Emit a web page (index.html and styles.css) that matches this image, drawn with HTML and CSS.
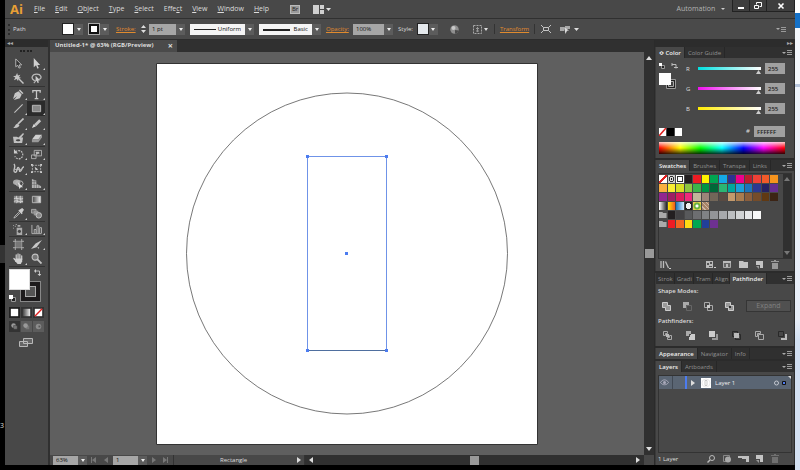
FILE: index.html
```html
<!DOCTYPE html>
<html lang="en">
<head>
    <meta charset="UTF-8">
    <meta name="viewport" content="width=device-width, initial-scale=1.0">
    <title>Untitled-1</title>
    <link rel="stylesheet" href="styles.css">
</head>
<body>
    <div class="behind-left"><span>3</span></div>

    <div class="app">
        <header class="menubar">
            <div class="logo">Ai</div>
            <nav class="menus">
                <button><u>F</u>ile</button>
                <button><u>E</u>dit</button>
                <button><u>O</u>bject</button>
                <button><u>T</u>ype</button>
                <button><u>S</u>elect</button>
                <button>Effe<u>c</u>t</button>
                <button><u>V</u>iew</button>
                <button><u>W</u>indow</button>
                <button><u>H</u>elp</button>
            </nav>
            <button class="bridge" aria-label="Go to Bridge">Br</button>
            <button class="arrange" aria-label="Arrange documents">
                <svg width="18" height="9" viewBox="0 0 18 9"><path fill="#d0d0d0" d="M0 0h6v9H0zM7 0h4v4H7zM7 5h4v4H7z"/><path fill="#e0e0e0" d="M13 3h5l-2.500 3z"/></svg>
            </button>
            <button class="workspace">Automation <i class="caret"></i></button>
            <div class="window-buttons">
                <button aria-label="Minimize"><svg width="8" height="8" viewBox="0 0 8 8"><path fill="#fff" d="M1 5h6v2H1z"/></svg></button>
                <button aria-label="Restore"><svg width="8" height="8" viewBox="0 0 8 8"><path fill="none" stroke="#fff" d="M2.500 2.500v-2h5v4h-2M.5 3.500h4v3h-4z"/></svg></button>
                <button class="close" aria-label="Close"><svg width="8" height="8" viewBox="0 0 8 8"><path stroke="#fff" stroke-width="1.600" d="M1.500 1.500l5 5M6.500 1.500l-5 5"/></svg></button>
            </div>
        </header>

        <div class="options">
            <div class="grip"></div>
            <span class="selection">Path</span>
            <button class="drop" aria-label="Fill"><span class="chip fill-chip"></span><i class="arrow"></i></button>
            <button class="drop stroke-drop" aria-label="Stroke color"><span class="chip stroke-chip"></span><i class="arrow"></i></button>
            <div class="field weight">
                <a href="#stroke">Stroke:</a>
                <svg class="spinner" width="7" height="10" viewBox="0 0 7 10"><path fill="#ddd" d="M3.500 1L6 4H1zM3.500 9L1 6h5z"/></svg>
                <input type="text" value="1 pt" aria-label="Stroke weight"><button class="arrow" aria-label="Weights"></button>
            </div>
            <div class="field profile"><select aria-label="Width profile"><option>Uniform</option></select><i class="arrow"></i></div>
            <div class="field profile brush"><select aria-label="Brush"><option>Basic</option></select><i class="arrow"></i></div>
            <div class="field opacity">
                <a href="#opacity">Opacity:</a>
                <input type="text" value="100%" aria-label="Opacity"><button class="arrow" aria-label="Opacities"></button>
            </div>
            <div class="field style">
                <span>Style:</span>
                <button class="drop" aria-label="Graphic style"><span class="chip style-chip"></span><i class="arrow"></i></button>
            </div>
            <button class="recolor" aria-label="Recolor artwork">
                <svg width="9" height="9" viewBox="0 0 9 9"><circle cx="4.500" cy="4.500" r="4.200" fill="#8f8f8f"/><circle cx="3.500" cy="3" r="2" fill="#c8c8c8"/><path fill="#4a4a4a" d="M5 5l3.500.5A4.200 4.200 0 0 1 5 8.700z"/></svg>
            </button>
            <button class="align" aria-label="Align">
                <svg width="15" height="9" viewBox="0 0 15 9"><path fill="none" stroke="#a8a8a8" stroke-dasharray="2 1" d="M.5.5h8v8h-8z"/><path fill="none" stroke="#999" d="M3 3.500h3M4.500 2v5M3 6h3"/><path fill="#ddd" d="M11 3h4l-2 3z"/></svg>
            </button>
            <div class="transform"><a href="#transform">Transform</a></div>
            <button class="isolate" aria-label="Isolate">
                <svg width="10" height="8" viewBox="0 0 10 8"><path fill="none" stroke="#c4c4c4" d="M2.500 2.500h5v3h-5zM0 0l2.500 2.500M10 0L7.500 2.500M0 8l2.500-2.500M10 8L7.500 5.500"/></svg>
            </button>
            <button aria-label="Select similar">
                <svg width="19" height="9" viewBox="0 0 19 9"><path fill="#a8a8a8" d="M0 2h4v4H0zM5 1h5v3H5z"/><path fill="#ddd" d="M4 2l5 3.500-2 .3L5.500 9zM14 3h5l-2.500 3z"/></svg>
            </button>
            <button class="flyout" aria-label="Control menu"></button>
        </div>

        <main class="workarea">
            <aside class="toolbox">
                <div class="dock-head">◂◂</div>
                <div class="tool-grip"></div>
                <div class="tools">
                    <button aria-label="Selection"><svg viewBox="0 0 12 12"><path fill="#333" stroke="#bbb" d="M3 1l6.500 6.500H6.800L8 10.500l-1.500.5-1.200-3L3 9.500z"/></svg></button>
                    <button class="more" aria-label="Direct selection"><svg viewBox="0 0 12 12"><path fill="#d0d0d0" d="M3 0l7 7.500H7L8.500 11l-1.500.6L5.500 8 3 10z"/></svg></button>
                    <button aria-label="Magic wand"><svg viewBox="0 0 12 12"><path stroke="#c4c4c4" stroke-width="1.600" d="M5.500 5.500l6 6"/><path fill="#c4c4c4" d="M4.500 0l.9 2.800L8 1.800 6.500 4.300 9 5.500l-3 .4L5.500 9 4 6.500 1 8l1.500-3L0 3.500l3-.4z"/></svg></button>
                    <button aria-label="Lasso"><svg viewBox="0 0 12 12"><path fill="none" stroke="#b8b8b8" stroke-width="1.400" d="M3.500 8C-.5 6 1 1.500 6 1.300s6.500 4 3 5.700M3.500 8c2 0 1 2-.5 3"/><path fill="#ccc" d="M5 3l5 5-2 .2.500 2.500-1.300.3L6.200 8.500 5 9.500z"/></svg></button>
                    <button class="more rule" aria-label="Pen"><svg viewBox="0 0 12 12"><path fill="#c6c6c6" d="M7.500.5l4 4-1.500 1L6.500 2zM6 2.500L9.500 6 7.500 10 1 12l3.500-4.500L0 11l2-6.500z"/></svg></button>
                    <button class="more rule" aria-label="Type"><svg viewBox="0 0 12 12"><path fill="none" stroke="#c8c8c8" stroke-width="1.400" d="M2 4V1.700h8V4M6 1.700v8.600M4 10.500h4"/></svg></button>
                    <button class="more" aria-label="Line segment"><svg viewBox="0 0 12 12"><path stroke="#c0c0c0" stroke-width="1.200" d="M1.500 10.500l9-9"/></svg></button>
                    <button class="more active" aria-label="Rectangle"><svg viewBox="0 0 12 12"><path fill="#888" stroke="#bdbdbd" d="M1.500 2.500h9v7h-9z"/></svg></button>
                    <button class="more" aria-label="Paintbrush"><svg viewBox="0 0 12 12"><path stroke="#c4c4c4" stroke-width="1.800" d="M11.500.5l-6 6"/><path fill="#c4c4c4" d="M5 6l2 2c-1 3-4 3-7 3 2-.5 2-4 5-5z"/></svg></button>
                    <button class="more" aria-label="Pencil"><svg viewBox="0 0 12 12"><path stroke="#c4c4c4" stroke-width="3" d="M10 2.500L4.500 8"/><path fill="#ddd" d="M3 6.500L5.500 9 1 11z"/></svg></button>
                    <button class="more" aria-label="Blob brush"><svg viewBox="0 0 12 12"><path fill="#c0c0c0" d="M0 4h4l2 1 5-5 1 1-3 4h2l-1 6H1z"/><path fill="#444" d="M3 7.500c2-1.500 5-.5 5 .5s-4 2-5-.5z"/></svg></button>
                    <button class="more" aria-label="Eraser"><svg viewBox="0 0 12 12"><path fill="#cfcfcf" d="M5 2h7L8 7H1z"/><path fill="#999" d="M1 7h7v3H1zM8 7l4-5v3l-4 5z"/></svg></button>
                    <button class="more rule" aria-label="Rotate"><svg viewBox="0 0 12 12"><path fill="none" stroke="#c0c0c0" stroke-width="1.300" stroke-dasharray="2 1" d="M3 3a4.500 4.500 0 1 1-1 5"/><path fill="#ccc" d="M1 0v5h4.500z"/></svg></button>
                    <button class="more rule" aria-label="Scale"><svg viewBox="0 0 12 12"><path fill="none" stroke="#b0b0b0" d="M3.500 1.500h8v6h-8zM.5 6.500h5v4h-5z"/><path fill="#bbb" d="M5 3h4v3L7.700 5 6 7z"/></svg></button>
                    <button class="more" aria-label="Width"><svg viewBox="0 0 12 12"><path fill="none" stroke="#c4c4c4" stroke-width="1.500" d="M1 1c3 3-2 8 1 9s2-6 4-5 0 5 2 4 1-4 4-5"/><path stroke="#bbb" d="M2 7h8"/></svg></button>
                    <button aria-label="Free transform"><svg viewBox="0 0 12 12"><path fill="none" stroke="#b4b4b4" stroke-dasharray="2 1" d="M1.500 2.500h9v7h-9z"/><path fill="#d0d0d0" d="M0 1h2v2H0zM0 9h2v2H0zM10 1h2v2h-2zM10 9h2v2h-2zM4 4l4 3-3 1z"/></svg></button>
                    <button class="more" aria-label="Shape builder"><svg viewBox="0 0 12 12"><ellipse cx="4" cy="4.500" rx="4" ry="3" fill="#aaa"/><ellipse cx="7" cy="6" rx="4" ry="3" fill="none" stroke="#bbb"/><path fill="#ddd" d="M5 4l6 6-2.500.1L7 12z"/></svg></button>
                    <button class="more" aria-label="Perspective grid"><svg viewBox="0 0 12 12"><path fill="#b4b4b4" d="M1 1l5 2v3l5 3v2H1z"/><path stroke="#555" stroke-width=".5" d="M3.500 1v10M6 3v8M8.500 7v4M1 4h6M1 7h8"/></svg></button>
                    <button class="rule" aria-label="Mesh"><svg viewBox="0 0 12 12"><path fill="#888" d="M1 2h10v8H1z"/><path fill="none" stroke="#e4e4e4" stroke-width=".8" d="M1 5c3-2 6 2 10 0M1 8c3-2 6 2 10 0M4 2c-1 3 2 5 0 8M8 2c-1 3 2 5 0 8"/></svg></button>
                    <button class="rule" aria-label="Gradient"><svg viewBox="0 0 12 12"><path fill="url(#grey)" stroke="#bbb" d="M1.500 2.500h9v7h-9z"/></svg></button>
                    <button class="more" aria-label="Eyedropper"><svg viewBox="0 0 12 12"><path fill="#ccc" d="M7 2l3-2 2 2-2 3 .5.8-1 1L5.800 3l1-1z"/><path fill="none" stroke="#bbb" d="M6.500 4.500L2 9l-1 2 2-1 4.500-4.500"/></svg></button>
                    <button aria-label="Blend"><svg viewBox="0 0 12 12"><path fill="#777" stroke="#aaa" d="M.5 1.500h5v4h-5z"/><path fill="#999" d="M3 3h5v5H3z"/><circle cx="8.500" cy="8" r="3" fill="#888" stroke="#ccc"/></svg></button>
                    <button class="more rule" aria-label="Symbol sprayer"><svg viewBox="0 0 12 12"><path fill="#aaa" d="M4 4h6v8H4zM5 1h3v2H5z"/><circle cx="7" cy="8" r="1.700" fill="#444"/><path fill="#bbb" d="M0 1h1v1H0zM2 2h1v1H2zM0 4h1v1H0zM3 0h1v1H3z"/></svg></button>
                    <button class="more rule" aria-label="Column graph"><svg viewBox="0 0 12 12"><path fill="none" stroke="#b8b8b8" d="M1 1v9.500h10.500M3.500 10V6h2v4M6.500 10V2h2v8M9.500 10V4h2v6"/></svg></button>
                    <button class="rule" aria-label="Artboard"><svg viewBox="0 0 12 12"><path fill="none" stroke="#b4b4b4" d="M2.500 0v12M9.500 0v12M0 2.500h12M0 9.500h12"/><path fill="#777" d="M3 3h6v6H3z"/></svg></button>
                    <button class="more rule" aria-label="Slice"><svg viewBox="0 0 12 12"><path fill="#c6c6c6" d="M12 1L5 5 0 11l6-2zM7 9l2 0-1 2z"/></svg></button>
                    <button class="more" aria-label="Hand"><svg viewBox="0 0 12 12"><path fill="none" stroke="#cfcfcf" stroke-width="1.300" stroke-linecap="round" d="M3.500 7V2M5.500 6V1M7.500 6V1.500M9.500 7V3M1 6l2.500 3"/><path fill="#cfcfcf" d="M3 6h7v3l-1.500 3H5L2.500 9z"/></svg></button>
                    <button aria-label="Zoom"><svg viewBox="0 0 12 12"><circle cx="4.500" cy="4.500" r="3.300" fill="#777" stroke="#c4c4c4" stroke-width="1.200"/><path stroke="#c4c4c4" stroke-width="2" d="M7 7l4.500 4.500"/></svg></button>
                </div>
                <div class="paint">
                    <button class="stroke-box" aria-label="Stroke"></button>
                    <button class="fill-box" aria-label="Fill"></button>
                    <svg class="swap" width="7" height="7" viewBox="0 0 7 7"><path fill="none" stroke="#bbb" d="M1 2h4.500v4"/><path fill="#ccc" d="M0 2l2-2v4zM3.500 5h4l-2 2z"/></svg>
                    <svg class="default" width="7" height="7" viewBox="0 0 7 7"><path fill="#222" stroke="#999" d="M2.500 2.500h4v4h-4z"/><path fill="#fff" d="M0 0h4v4H0z"/></svg>
                </div>
                <div class="modes">
                    <button class="on" aria-label="Color"><svg viewBox="0 0 12 10"><path fill="#fff" d="M2 1h8v8H2z"/></svg></button>
                    <button aria-label="Gradient"><svg viewBox="0 0 12 10"><path fill="url(#grey)" d="M2 1h8v8H2z"/></svg></button>
                    <button aria-label="None"><svg viewBox="0 0 12 10"><path fill="#fff" d="M2 1h8v8H2z"/><path stroke="#e02020" stroke-width="1.500" d="M2 9l8-8"/></svg></button>
                </div>
                <div class="modes draw">
                    <button class="on" aria-label="Draw normal"><svg viewBox="0 0 12 10"><circle cx="5" cy="4" r="2.500" fill="#999"/><path fill="#777" stroke="#333" stroke-width=".5" d="M5 4h4v4H5z"/></svg></button>
                    <button aria-label="Draw behind"><svg viewBox="0 0 12 10"><path fill="#777" d="M5 4h4v4H5z"/><circle cx="5" cy="4" r="2.500" fill="#999"/></svg></button>
                    <button aria-label="Draw inside"><svg viewBox="0 0 12 10"><circle cx="6" cy="5" r="3" fill="#8c8c8c"/><path fill="#555" d="M6 4h2v2H6z"/></svg></button>
                </div>
                <button class="screen" aria-label="Screen mode"><svg width="14" height="11" viewBox="0 0 14 11"><path fill="#666" stroke="#b8b8b8" d="M4.500 1.500h9v5h-9zM.5 4.500h8v5h-8z"/></svg></button>
            </aside>

            <section class="document">
                <div class="tabs"><div class="doc-tab">Untitled-1* @ 63% (RGB/Preview) <button aria-label="Close tab">×</button></div></div>
                <div class="viewport">
                    <div class="canvas">
                        <svg class="artboard" width="382" height="382" viewBox="0 0 382 382">
                            <path fill="#fff" stroke="#333" d="M.5.5h381v381H.5z"/>
                            <circle cx="191" cy="190.500" r="160.500" fill="none" stroke="#555" stroke-width=".8"/>
                            <path fill="none" stroke="#6f93e8" d="M151.500 93.500h79v194h-79z"/>
                            <path stroke="#4f6f9f" d="M152 287.500h78"/>
                            <path fill="#4c7cf0" d="M150 92h3v3h-3zM229 92h3v3h-3zM150 286h3v3h-3zM229 286h3v3h-3zM189 189h3v3h-3z"/>
                        </svg>
                    </div>
                    <div class="vscroll"><i class="up"></i><i class="thumb"></i><i class="down"></i></div>
                </div>
                <footer class="status">
                    <div class="field"><input type="text" value="63%" aria-label="Zoom level"><button class="arrow" aria-label="Zoom levels"></button></div>
                    <svg class="nav" width="18" height="6" viewBox="0 0 18 6"><path fill="#777" d="M0 0h1v6H0zM5 0v6L1 3zM17 0v6l-4-3z"/></svg>
                    <div class="field"><input type="text" value="1" aria-label="Artboard number"><button class="arrow" aria-label="Artboards"></button></div>
                    <svg class="nav" width="18" height="6" viewBox="0 0 18 6"><path fill="#777" d="M1 0v6l4-3zM12 0v6l4-3zM16 0h1v6h-1z"/></svg>
                    <div class="current">Rectangle<i class="right"></i></div>
                    <div class="hscroll"><i class="left"></i><i class="thumb"></i><i class="right"></i></div>
                    <div class="corner"></div>
                </footer>
            </section>

            <aside class="panels">
                <div class="dock-head">▸▸</div>
                <section class="panel color-panel">
                    <div class="panel-tabs"><button class="on">≎ Color</button><button>Color Guide</button><button class="flyout" aria-label="Color menu"></button></div>
                    <div class="color-body">
                        <div class="color-chips">
                            <svg width="20" height="30" viewBox="0 0 20 30"><path fill="#222" stroke="#999" d="M2.500 2.500h3v3h-3z"/><path fill="#fff" d="M0 0h3v3H0z"/><path fill="none" stroke="#bbb" d="M13 1.500h4v4M13 0v3M15 4.500h4"/><path fill="#222" stroke="#999" d="M7.500 16.500h9v9h-9z"/><path fill="#444" stroke="#aaa" d="M9.500 18.500h5v5h-5z"/><path fill="#fff" d="M0 10h12v12H0z"/></svg>
                        </div>
                        <div class="channels">
                            <label class="channel red"><span>R</span><input type="range" min="0" max="255" value="255" aria-label="Red"><input type="text" value="255"></label>
                            <label class="channel green"><span>G</span><input type="range" min="0" max="255" value="255" aria-label="Green"><input type="text" value="255"></label>
                            <label class="channel blue"><span>B</span><input type="range" min="0" max="255" value="255" aria-label="Blue"><input type="text" value="255"></label>
                        </div>
                    </div>
                    <div class="hex-row">
                        <svg width="23" height="8" viewBox="0 0 23 8"><path fill="#fff" d="M0 0h7v8H0zM16 0h7v8h-7z"/><path stroke="#e02020" stroke-width="1.500" d="M0 8l7-8"/><path d="M8 0h7v8H8z"/></svg>
                        <label># <input type="text" value="FFFFFF"></label>
                    </div>
                    <div class="spectrum"></div>
                </section>

                <section class="panel swatch-panel">
                    <div class="panel-tabs"><button class="on">Swatches</button><button>Brushes</button><button>Transpa</button><button>Links</button><button class="flyout" aria-label="Swatches menu"></button></div>
                    <div class="swatch-well">
                        <div class="swatches" id="swatches"></div>
                        <div class="well-scroll"><i class="up"></i><i class="down"></i></div>
                    </div>
                    <div class="panel-foot">
                        <button class="first" aria-label="Libraries"><svg viewBox="0 0 12 10"><path fill="none" stroke="#bbb" stroke-width="1.300" d="M1 1v7M3.500 1v7M5.500 1.500l3 6.500"/><path fill="#ccc" d="M9 8h2v1H9z"/></svg></button>
                        <button aria-label="Kinds"><svg viewBox="0 0 12 10"><path fill="#bbb" d="M1 1h7v7H1z"/><path fill="#555" d="M2 3h2v2H2zM5 2h2v2H5zM4 6h3v1H4z"/><path fill="#ccc" d="M9 7h2v1H9z"/></svg></button>
                        <button aria-label="Options"><svg viewBox="0 0 12 10"><path fill="#666" stroke="#aaa" d="M2.500 1.500h7v6h-7z"/><path fill="#bbb" d="M2 1h8v2H2zM5 4h2v3H5z"/></svg></button>
                        <button aria-label="New group"><svg viewBox="0 0 12 10"><path fill="#c4c4c4" d="M2 1h4l1 1h4v6H2z"/></svg></button>
                        <button aria-label="New swatch"><svg viewBox="0 0 12 10"><path fill="#c4c4c4" d="M3 1h7v7H7V5H3z"/><path fill="#999" d="M3 6h3v3z"/></svg></button>
                        <button aria-label="Delete"><svg viewBox="0 0 12 10"><path fill="#999" d="M3 3h6v6H3zM2 1h8v1H2zM5 0h2v1H5z"/></svg></button>
                    </div>
                </section>

                <section class="panel path-panel">
                    <div class="panel-tabs"><button>Strok</button><button>Gradi</button><button>Tram</button><button>Align</button><button class="on">Pathfinder</button><button class="flyout" aria-label="Pathfinder menu"></button></div>
                    <div class="path-body">
                        <div class="path-title">Shape Modes:</div>
                        <div class="shape-modes">
                            <button aria-label="Unite"><svg viewBox="0 0 9 9"><path fill="#999" stroke="#ccc" d="M.5.5h5v3h3v5h-5v-3h-3z"/></svg></button>
                            <button aria-label="Minus front"><svg viewBox="0 0 9 9"><path fill="#aaa" d="M0 0h6v3H3v3H0z"/><path fill="none" stroke="#666" d="M3.500 3.500h5v5h-5z"/></svg></button>
                            <button aria-label="Intersect"><svg viewBox="0 0 9 9"><path fill="none" stroke="#aaa" d="M.5.5h5v5h-5zM3.500 3.500h5v5h-5z"/><path fill="#ccc" d="M3 3h3v3H3z"/></svg></button>
                            <button aria-label="Exclude"><svg viewBox="0 0 9 9"><path fill="#999" stroke="#ccc" d="M.5.5h5v3h3v5h-5v-3h-3z"/><path fill="#333" d="M4 4h2v2H4z"/></svg></button>
                            <button class="expand" disabled>Expand</button>
                        </div>
                        <div class="path-title">Pathfinders:</div>
                        <div class="pathfinders">
                            <button aria-label="Divide"><svg viewBox="0 0 9 9"><path fill="none" stroke="#aaa" d="M.5.5h4v2h-2v2h-2zM6.500 4.500h2v4h-4v-2h2z"/><path fill="#bbb" d="M3 3h3v3H3z"/></svg></button>
                            <button aria-label="Trim"><svg viewBox="0 0 9 9"><path fill="#aaa" d="M0 0h5v3H3v2H0z"/><path fill="#ccc" d="M4 4h1V3h4v6H3V6h1z"/></svg></button>
                            <button aria-label="Merge"><svg viewBox="0 0 9 9"><path fill="#ccc" d="M0 0h6v6H0z"/><path fill="#999" d="M7 3h2v6H3V7h4z"/></svg></button>
                            <button aria-label="Crop"><svg viewBox="0 0 9 9"><path fill="none" stroke="#292929" d="M.5.5h5v5h-5zM3.500 3.500h5v5h-5z"/><path fill="#bbb" d="M2 2h5v5H2z"/></svg></button>
                            <button aria-label="Outline"><svg viewBox="0 0 9 9"><path fill="none" stroke="#aaa" d="M.5.5h5v2h-3v3h-2zM3.500 3.500h5v5h-5z"/></svg></button>
                            <button aria-label="Minus back"><svg viewBox="0 0 9 9"><path fill="none" stroke="#292929" d="M.5.5h5v5h-5z"/><path fill="#bbb" d="M7 3h2v6H3V7h4z"/></svg></button>
                        </div>
                    </div>
                </section>

                <section class="panel">
                    <div class="panel-tabs"><button class="on">Appearance</button><button>Navigator</button><button>Info</button><button class="flyout" aria-label="Appearance menu"></button></div>
                </section>

                <section class="panel layers-panel">
                    <div class="panel-tabs"><button class="on">Layers</button><button>Artboards</button><button class="flyout" aria-label="Layers menu"></button></div>
                    <div class="layers">
                        <div class="layer">
                            <svg class="eye" width="9" height="7" viewBox="0 0 9 7"><path fill="none" stroke="#aab" d="M.5 3.500c2-3.500 6-3.500 8 0-2 3-6 3-8 0z"/><circle cx="4.500" cy="3.500" r="1.500" fill="#aab"/></svg>
                            <span class="lock"></span>
                            <span class="layer-color"></span>
                            <i class="right"></i>
                            <svg class="thumbnail" width="10" height="10" viewBox="0 0 10 10"><path fill="#fff" d="M0 0h10v10H0z"/><circle cx="5" cy="5" r="4" fill="none" stroke="#ddd" stroke-width=".6"/><path fill="none" stroke="#aaa" stroke-width=".6" d="M4 2.500h2v5H4z"/></svg>
                            <span class="layer-name">Layer 1</span>
                            <svg class="target" width="17" height="13" viewBox="0 0 17 13"><circle cx="2.500" cy="7" r="2" fill="none" stroke="#c4c8d0"/><path fill="#4c7cf0" stroke="#111" d="M8.500 5.500h3v3h-3z"/><path fill="#ddd" d="M14 0h3v3z"/></svg>
                        </div>
                    </div>
                    <div class="panel-foot layer-foot">
                        <span>1 Layer</span>
                        <button aria-label="Locate"><svg viewBox="0 0 12 10"><circle cx="7" cy="4" r="2.500" fill="none" stroke="#bbb"/><path stroke="#bbb" stroke-width="1.500" d="M5 6L2.500 8.500"/></svg></button>
                        <button aria-label="Clipping mask"><svg viewBox="0 0 12 10"><path fill="none" stroke="#888" d="M2.500 1.500h6v6h-6z"/><circle cx="7" cy="5.500" r="3" fill="#aaa"/></svg></button>
                        <button aria-label="New sublayer"><svg viewBox="0 0 12 10"><path fill="#c0c0c0" d="M1 2h4v2H1zM5 2h7v6H9V5H5z"/></svg></button>
                        <button aria-label="New layer"><svg viewBox="0 0 12 10"><path fill="#c4c4c4" d="M3 1h7v7H7V5H3z"/><path fill="#999" d="M3 6h3v3z"/></svg></button>
                        <button aria-label="Delete layer"><svg viewBox="0 0 12 10"><path fill="#707070" d="M3 3h6v6H3zM2 1h8v1H2zM5 0h2v1H5z"/></svg></button>
                    </div>
                </section>
            </aside>
        </main>
    </div>

    <div class="behind-right"></div>

    <svg class="defs" width="0" height="0"><defs><linearGradient id="grey"><stop offset="0" stop-color="#444"/><stop offset="1" stop-color="#eee"/></linearGradient></defs></svg>

    <script>
        // one array per row: a color, or a class name that starts with "."
        const rows = [
            ['.none', '.registration', '.white', '#231f20', '#ed1c24', '#fff200', '#00a651', '#14a9e6', '#2e3192', '#ec008c', '#be1e2d', '#ef4136', '#f15a29', '#f7941e'],
            ['#fbb040', '#f9ed32', '#d7df23', '#8dc63f', '#39b54a', '#009444', '#006838', '#2bb673', '#00a79d', '#1c9fda', '#1c75bc', '#2b3990', '#262262', '#662d91'],
            ['#92278f', '#9e1f63', '#da1c5c', '#ee2a7b', '#c2b59b', '#9b8579', '#726658', '#594a42', '#c49a6c', '#a97c50', '#8b5e3c', '#754c29', '#603913', '#3c2415'],
            ['.fade', '.sunset', '.sky', '.dot', '.leaf', '.pattern'],
            ['.folder', '#231f20', '#414042', '#58595b', '#6d6e71', '#808285', '#939598', '#a7a9ac', '#bcbec0', '#d1d3d4', '#e6e7e8', '#f8f8f8'],
            ['.folder', '#ed1c24', '#f26522', '#ffd914', '#00a651', '#21409a', '#6e3192']
        ];
        const swatches = document.getElementById('swatches');

        rows.forEach(row => {
            const line = document.createElement('div');
            line.className = 'swatch-row';
            row.forEach(item => {
                const box = document.createElement('span');
                box.className = 'swatch';
                if (item[0] === '.') {
                    box.classList.add(item.slice(1));
                } else {
                    box.style.backgroundColor = item;
                }
                line.appendChild(box);
            });
            swatches.appendChild(line);
        });
    </script>
</body>
</html>
```
FILE: styles.css
```css
* {
    box-sizing: border-box;
}
body {
    margin: 0;
    height: 100vh;
    display: grid;
    grid-template-columns: 5px minmax(0, 1fr) 5px;
    grid-template-rows: minmax(0, 1fr) 5px;
    background-color: #000;
    color: #dcdcdc;
    font-family: "Open Sans", sans-serif;
    font-size: 6px;
    line-height: 10px;
    overflow: hidden;
}
button, input, select {
    font: inherit;
    color: inherit;
    margin: 0;
    padding: 0;
    border: 0;
    border-radius: 0;
    background: none;
}
svg {
    display: block;
}
a {
    color: #e08a2e;
}
.defs {
    position: absolute;
}

/* what shows behind the window */
.behind-left {
    display: flex;
    align-items: flex-end;
    padding-bottom: 34px;
    font-size: 7px;
    background: linear-gradient(#000 245px, #333 245px, #333 263px, #000 263px);
}
.behind-right {
    grid-column: 3;
    grid-row: 1 / 3;
    background: linear-gradient(#fff 13px, #1672c8 13px, #1672c8 28px, #f4f7fb 28px, #f4f7fb 84px, #b8c6dc 84px, #b8c6dc 87px, #eef3fa 87px, #e8eef8 320px, #d3e0f2 340px);
}

.app {
    display: flex;
    flex-direction: column;
    min-width: 0;
    background-color: #484848;
}

/* menu bar */
.menubar {
    display: flex;
    align-items: center;
    height: 18px;
    font-size: 7px;
}
.logo {
    width: 29px;
    padding-left: 5px;
    color: #e9a035;
    font-size: 13px;
    font-weight: bold;
}
.menus {
    display: flex;
    gap: 10px;
}
.menus u {
    text-underline-offset: 1px;
}
.bridge {
    width: 10px;
    height: 9px;
    margin-left: 21px;
    background-color: #999;
    border: 1px solid #bbb;
    color: #222;
    font-size: 6px;
    line-height: 7px;
}
.arrange {
    margin-left: 13px;
}
.workspace {
    margin-left: auto;
    margin-right: 7px;
    color: #b4b4b4;
}
.caret {
    display: inline-block;
    margin: 0 0 1px 4px;
    border: 2px solid transparent;
    border-top-color: #ccc;
    border-bottom: 0;
}
.window-buttons {
    display: flex;
    align-self: flex-start;
    gap: 1px;
    height: 12px;
    border: 1px solid #222;
    border-top: 0;
    background-color: #222;
}
.window-buttons button {
    display: grid;
    place-items: center;
    width: 16px;
    background-color: #3e3e3e;
}
.window-buttons .close {
    width: 27px;
}

/* control bar */
.options {
    display: flex;
    align-items: center;
    height: 22px;
    border-top: 1px solid #303030;
    border-bottom: 1px solid #2c2c2c;
    background-color: #4a4a4a;
}
.grip {
    width: 2px;
    height: 11px;
    margin: 0 3px;
    border-left: 2px dotted #2c2c2c;
}
.selection {
    width: 48px;
}
.drop, .field {
    display: flex;
    align-items: center;
}
.drop {
    margin-left: 1px;
}
.chip {
    width: 12px;
    height: 12px;
    border: 1px solid #222;
    background-color: #fff;
}
.stroke-drop {
    margin-left: 5px;
}
.stroke-chip {
    border: 3px solid #111;
    outline: 1px solid #aaa;
    outline-offset: -1px;
}
.style-chip {
    background-color: #e4e8ec;
}
.arrow {
    display: grid;
    place-items: center;
    flex: none;
    width: 9px;
    height: 11px;
    background-color: #5c5c5c;
}
.arrow::after {
    content: "";
    border: 2px solid transparent;
    border-top: 3px solid #eee;
    border-bottom: 0;
}
.field input {
    width: 27px;
    height: 11px;
    padding-left: 3px;
    background-color: #a6a6a6;
    color: #111;
}
.weight {
    margin-left: 7px;
}
.weight a {
    width: 24px;
}
.spinner {
    margin-right: 2px;
}
.profile {
    margin-left: 5px;
}
.profile select {
    appearance: none;
    width: 55px;
    height: 11px;
    padding-right: 4px;
    background: linear-gradient(#222, #222) 4px 5px / 22px 1px no-repeat #f4f4f4;
    color: #111;
    text-align-last: right;
}
.brush select {
    width: 53px;
    background-size: 27px 2px;
}
.opacity {
    margin-left: 5px;
}
.opacity a {
    width: 27px;
}
.opacity input {
    width: 31px;
}
.style {
    margin-left: 5px;
}
.style .drop {
    margin-left: 4px;
}
.recolor {
    margin-left: 12px;
}
.align {
    margin-left: 14px;
}
.transform {
    margin-left: 6px;
    padding: 0 5px;
    border: solid #333;
    border-width: 0 1px;
}
.isolate {
    margin: 0 9px 0 6px;
}

/* small panel menu: a caret and three lines */
.flyout {
    display: flex;
    align-items: center;
    gap: 1px;
    margin-left: auto;
}
.flyout::before {
    content: "";
    border: 2px solid transparent;
    border-top-color: #aaa;
    border-bottom: 0;
}
.flyout::after {
    content: "";
    width: 5px;
    height: 5px;
    background: repeating-linear-gradient(#999 0, #999 1px, transparent 1px, transparent 2px);
}
.options .flyout {
    margin-right: 9px;
}

.workarea {
    display: flex;
    flex: 1;
    min-height: 0;
}
.dock-head {
    height: 7px;
    background-color: #2c2c2c;
    color: #aaa;
    line-height: 6px;
}

/* tools */
.toolbox {
    flex: none;
    width: 45px;
    border-right: 2px solid #303030;
}
.toolbox .dock-head {
    padding-left: 2px;
}
.tool-grip {
    width: 12px;
    height: 2px;
    margin: 3px 0 4px 15px;
    border-top: 2px dotted #222;
}
.tools {
    display: grid;
    grid-template-columns: repeat(2, 18px);
    grid-auto-rows: 15px;
    margin: 0 3px 0 4px;
    border-bottom: 1px solid #333;
}
.tools button {
    display: grid;
    place-items: center;
    position: relative;
}
.tools svg {
    width: 11px;
    height: 11px;
}
.tools .rule {
    border-top: 1px solid #333;
}
.tools .active {
    background-color: #2b2b2b;
}
.more::after {
    content: "";
    position: absolute;
    right: 0;
    bottom: 1px;
    border: 1px solid #ccc;
    border-top-color: transparent;
    border-left-color: transparent;
}
.paint {
    position: relative;
    height: 36px;
    margin: 2px 4px;
}
.paint > * {
    position: absolute;
}
.fill-box {
    left: 0;
    top: 0;
    width: 21px;
    height: 21px;
    background-color: #fff;
    border: 1px solid #ddd;
}
.stroke-box {
    left: 11px;
    top: 12px;
    width: 21px;
    height: 21px;
    border: 5px solid #1d1b1c;
    outline: 1px solid #888;
    outline-offset: -1px;
    background-color: #555;
    box-shadow: inset 0 0 0 1px #aaa;
}
.swap {
    right: 3px;
    top: 0;
}
.default {
    left: 0;
    bottom: 3px;
}
.modes {
    display: grid;
    grid-template-columns: repeat(3, 1fr);
    gap: 1px;
    margin: 0 3px 3px;
    padding: 0 1px;
}
.modes button {
    height: 11px;
    background-color: #333;
}
.modes svg {
    width: 100%;
    height: 11px;
}
.modes .on {
    background-color: #222;
}
.draw button {
    background-color: #5c5c5c;
}
.draw .on {
    background-color: #333;
}
.screen {
    margin: 2px 0 0 14px;
}

/* document window */
.document {
    display: flex;
    flex-direction: column;
    flex: 1;
    min-width: 0;
}
.tabs {
    display: flex;
    height: 12px;
    background-color: #303030;
}
.doc-tab {
    display: flex;
    justify-content: space-between;
    width: 127px;
    padding: 0 4px 0 5px;
    background-color: #4a4a4a;
    font-weight: bold;
    white-space: nowrap;
}
.doc-tab button {
    font-size: 9px;
}
.viewport {
    display: flex;
    flex: 1;
    min-height: 0;
}
.canvas {
    display: grid;
    place-items: center;
    flex: 1;
    overflow: hidden;
    background-color: #5f5f5f;
}
.up, .down, .left, .right {
    border: 3px solid transparent;
}
.up {
    border-bottom: 4px solid #ddd;
    border-top: 0;
}
.down {
    border-top: 4px solid #ddd;
    border-bottom: 0;
}
.left {
    border-right: 4px solid #ddd;
    border-left: 0;
}
.right {
    border-left: 4px solid #ddd;
    border-right: 0;
}
.thumb {
    width: 9px;
    height: 9px;
    background-color: #999;
}
.vscroll, .well-scroll {
    display: flex;
    flex-direction: column;
    justify-content: space-between;
    align-items: center;
    width: 10px;
    padding: 4px 0;
    background-color: #303030;
}
.status {
    display: flex;
    align-items: center;
    height: 10px;
    padding-left: 3px;
}
.status .field input {
    width: 25px;
    height: 9px;
}
.status .arrow {
    height: 9px;
}
.nav {
    margin: 0 4px;
}
.current {
    display: flex;
    flex: 0 0 132px;
    align-items: center;
    justify-content: space-between;
    height: 10px;
    padding: 0 3px 0 46px;
    border: solid #333;
    border-width: 0 1px;
}
.hscroll {
    display: flex;
    flex: 1;
    align-items: center;
    justify-content: space-between;
    height: 10px;
    padding: 0 4px;
    background-color: #303030;
}
.corner {
    width: 10px;
}

/* panels */
.panels {
    display: flex;
    flex-direction: column;
    flex: none;
    width: 141px;
    padding: 0 1px;
    background-color: #2b2b2b;
}
.panels .dock-head {
    text-align: right;
    padding-right: 1px;
}
.panel {
    margin-bottom: 2px;
    border-left: 1px solid #3a3a3a;
    background-color: #484848;
}
.panel-tabs {
    display: flex;
    align-items: center;
    height: 11px;
    padding-right: 2px;
    background-color: #303030;
}
.panel-tabs button {
    height: 11px;
    padding: 0 3px;
    border-right: 1px solid #272727;
    color: #909090;
}
.panel-tabs .on {
    background-color: #484848;
    color: #eee;
    font-weight: 600;
}
.panel-tabs .flyout {
    padding: 0;
    border-right: 0;
}
.color-body {
    display: flex;
    padding: 5px 9px 0 3px;
}
.channels {
    flex: 1;
    min-width: 0;
    margin-left: 7px;
}
.channel {
    display: flex;
    align-items: center;
    gap: 4px;
    height: 11px;
    margin-bottom: 9px;
}
.channel span {
    width: 8px;
}
.channel input[type="text"], .hex-row input {
    width: 20px;
    height: 11px;
    padding-left: 3px;
    background-color: #a0a0a0;
    color: #222;
    font-weight: 600;
}
.channel input[type="range"] {
    appearance: none;
    flex: 1;
    width: 0;
    min-width: 0;
    height: 11px;
}
.channel input[type="range"]::-webkit-slider-runnable-track {
    height: 3px;
    background: linear-gradient(90deg, #00e0e0, #fff);
}
.channel input[type="range"]::-webkit-slider-thumb {
    appearance: none;
    width: 5px;
    height: 4px;
    margin-top: 3px;
    background-color: #ccc;
    clip-path: polygon(50% 0, 100% 100%, 0 100%);
}
.green input[type="range"]::-webkit-slider-runnable-track {
    background: linear-gradient(90deg, #f010f0, #fff);
}
.blue input[type="range"]::-webkit-slider-runnable-track {
    background: linear-gradient(90deg, #ffec00, #fff);
}
.hex-row {
    display: flex;
    align-items: center;
    justify-content: space-between;
    padding: 3px 9px 5px 3px;
}
.hex-row label {
    display: flex;
    gap: 4px;
}
.hex-row input {
    width: 31px;
}
.spectrum {
    height: 12px;
    margin: 0 9px 0 3px;
    background: linear-gradient(rgba(255, 255, 255, 0.8), transparent 50%, rgba(0, 0, 0, 0.8)),
        linear-gradient(90deg, #f00, #ff0 17%, #0f0 33%, #0ff 50%, #00f 67%, #f0f 83%, #f00);
}
.color-panel {
    padding-bottom: 4px;
}
.swatch-well {
    display: flex;
    justify-content: space-between;
    height: 86px;
    margin: 2px 2px 0;
    border: 1px solid #333;
}
.swatches {
    width: 119px;
    padding-top: 1px;
}
.swatch-row {
    display: grid;
    grid-template-columns: repeat(14, 1fr);
    gap: 1px;
    margin-bottom: 1px;
}
.swatch {
    height: 8px;
}
.none {
    background: linear-gradient(135deg, #fff 42%, #e02020 42%, #e02020 58%, #fff 58%);
}
.registration {
    background: radial-gradient(circle, #111 1px, #ddd 1px, #ddd 2px, #333 2px, #333 3px, #ccc 3px);
}
.white {
    border: 1px solid #fff;
    background-color: #fff;
    box-shadow: inset 0 0 0 1px #333;
}
.fade {
    background: linear-gradient(90deg, #fff, #222);
}
.sunset {
    background: linear-gradient(90deg, #ffe600, #f15a24);
}
.sky {
    background: linear-gradient(90deg, #1c75bc, #cfeaff);
}
.dot {
    background: radial-gradient(circle, #eee 3px, #222 3px);
}
.leaf {
    background: radial-gradient(circle, #fff 1px, #6cb33f 2px, #6cb33f 3px, #e8d24a 4px);
}
.pattern {
    background: repeating-linear-gradient(45deg, #a98468, #a98468 2px, #cdb8a4 2px, #cdb8a4 3px);
}
.folder {
    height: 6px;
    margin-top: 1px;
    background-color: #aaa;
    clip-path: polygon(0 0, 45% 0, 55% 18%, 100% 18%, 100% 100%, 0 100%);
}
.well-scroll {
    width: 8px;
    padding: 3px 0;
}
.well-scroll .up {
    border-bottom-color: #777;
}
.well-scroll .down {
    border-top-color: #777;
}
.panel-foot {
    display: flex;
    justify-content: flex-end;
    align-items: center;
    gap: 4px;
    height: 12px;
    padding-right: 13px;
}
.panel-foot svg {
    width: 12px;
    height: 10px;
}
.panel-foot .first {
    margin: 0 auto 0 4px;
}
.path-panel .panel-tabs button {
    padding: 0 1px 0 2px;
}
.path-panel .panel-tabs .on {
    padding: 0 3px 0 2px;
}
.path-panel .panel-tabs .flyout {
    padding: 0;
}
.path-body {
    padding: 2px 3px 3px 2px;
}
.path-title {
    height: 10px;
    font-weight: 600;
}
.shape-modes {
    display: flex;
    align-items: center;
    gap: 12px;
    height: 20px;
    padding-left: 4px;
}
.shape-modes svg, .pathfinders svg {
    width: 9px;
    height: 9px;
}
.expand {
    flex: 1;
    height: 12px;
    border: 1px solid #353535;
    background-color: #505050;
    color: #808080;
    font-size: 7px;
    line-height: 10px;
}
.pathfinders {
    display: flex;
    align-items: center;
    justify-content: space-between;
    height: 15px;
    margin-top: 2px;
    padding: 0 4px 0 5px;
}
.layers-panel {
    display: flex;
    flex: 1;
    flex-direction: column;
    margin-bottom: 0;
}
.layers {
    flex: 1;
    margin: 3px 2px 0;
    border: 1px solid #333;
}
.layer {
    display: flex;
    align-items: center;
    height: 13px;
    background-color: #5a6573;
}
.eye {
    margin: 0 3px 0 1px;
}
.lock {
    width: 13px;
    height: 13px;
    border-left: 1px solid #414954;
}
.layer-color {
    width: 2px;
    height: 13px;
    margin-right: 4px;
    background-color: #4c7cf0;
}
.thumbnail {
    margin: 0 4px 0 6px;
}
.layer-name {
    color: #eee;
}
.target {
    margin-left: auto;
}
.layer-foot span {
    margin-right: auto;
    padding-left: 2px;
}
```
